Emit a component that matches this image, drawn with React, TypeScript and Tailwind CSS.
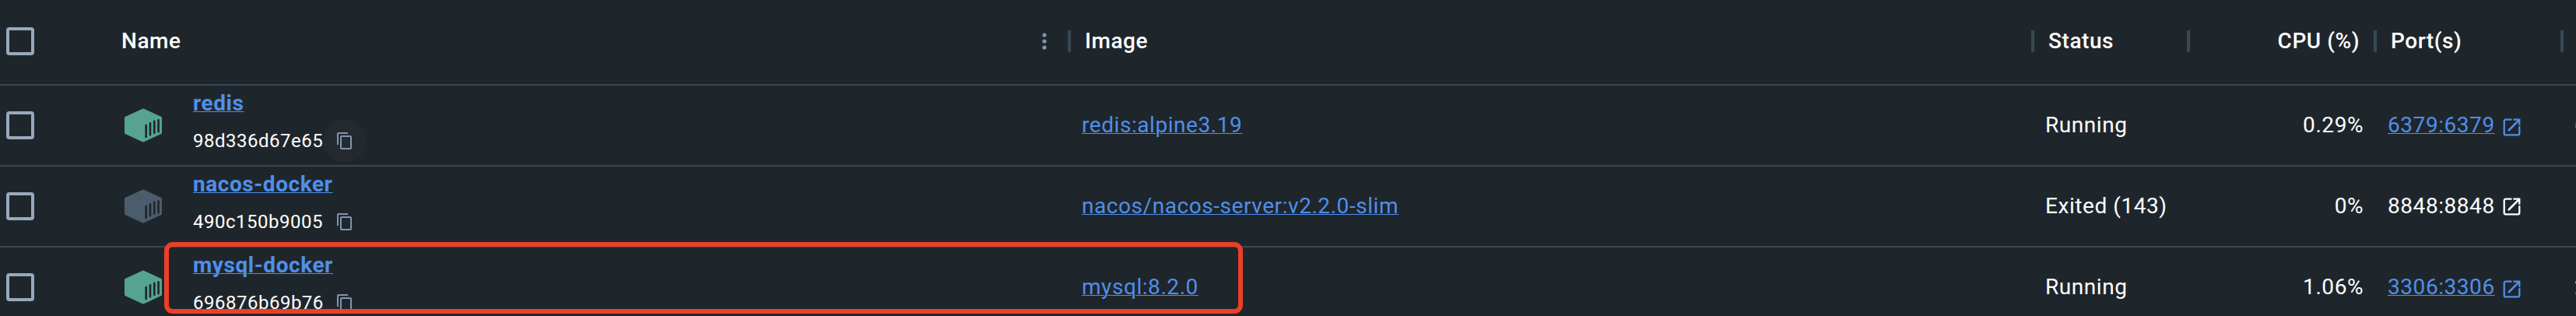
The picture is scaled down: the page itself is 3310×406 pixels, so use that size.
import React from "react";

type Container = {
  name: string;
  id: string;
  image: string;
  status: string;
  cpu: string;
  port: string;
  running: boolean;
  hovered?: boolean;
  next: string;
};

const containers: Container[] = [
  { name: "redis", id: "98d336d67e65", image: "redis:alpine3.19", status: "Running", cpu: "0.29%", port: "6379:6379", running: true, hovered: true, next: "6" },
  { name: "nacos-docker", id: "490c150b9005", image: "nacos/nacos-server:v2.2.0-slim", status: "Exited (143)", cpu: "0%", port: "8848:8848", running: false, next: "" },
  { name: "mysql-docker", id: "696876b69b76", image: "mysql:8.2.0", status: "Running", cpu: "1.06%", port: "3306:3306", running: true, next: "2" },
];

const columns = "grid grid-cols-[156px_1218px_1238px_200px_240px_240px_18px] items-center";
const link = "text-[#4f8fea] underline decoration-[1px] underline-offset-[1px]";

function Checkbox() {
  return <div className="ml-[8px] h-[36px] w-[36px] rounded-[4px] border-4 border-[#98a9bd]" />;
}

function ContainerIcon({ running }: { running: boolean }) {
  return (
    <svg className="h-[44px] w-[48px] shrink-0" viewBox="0 0 48 44">
      <path
        className={running ? "fill-[#55a390]" : "fill-[#4b5c6d]"}
        d="M23 .8Q24 .3 25 .8L47.2 11Q48 11.4 48 12.2V31.8Q48 32.6 47.2 33L25 43.2Q24 43.7 23 43.2L.8 33Q0 32.6 0 31.8V12.2Q0 11.4 .8 11Z"
      />
      <path className="stroke-[#1f262b]" strokeWidth="2.6" strokeLinecap="round" d="M27.7 22V37M33 19.3V34.3M38.3 16.7V31.7M43.6 15.2V30.2" />
    </svg>
  );
}

function CopyIcon() {
  return (
    <svg className="h-[24px] w-[24px] fill-[#7f95ae]" viewBox="0 0 24 24">
      <path d="M16 1H4c-1.1 0-2 .9-2 2v14h2V3h12zm3 4H8c-1.1 0-2 .9-2 2v14c0 1.1.9 2 2 2h11c1.1 0 2-.9 2-2V7c0-1.1-.9-2-2-2m0 16H8V7h11z" />
    </svg>
  );
}

function OpenIcon({ className }: { className: string }) {
  return (
    <svg className={`ml-[7px] h-[29px] w-[29px] shrink-0 fill-none stroke-current ${className}`} viewBox="0 0 24 24">
      <path strokeWidth="1.9" d="M12 3.9H5.4A1.5 1.5 0 0 0 3.9 5.4V18.6A1.5 1.5 0 0 0 5.4 20.1H18.6A1.5 1.5 0 0 0 20.1 18.6V10.9" />
      <path strokeWidth="1.9" d="M13.6 3.9H20.1V9.8" />
      <path strokeWidth="2.2" strokeLinecap="round" d="M8.9 15.1L19.3 4.7" />
    </svg>
  );
}

function Separator() {
  return <div className="h-[28px] w-[4px] shrink-0 bg-[#394853]" />;
}

export default function App() {
  return (
    <div className="relative h-[406px] w-[3310px] overflow-hidden bg-[#1f262b] font-['Roboto',sans-serif] text-[28px] leading-[40px] tracking-[0.56px] text-white">
      <div className={`${columns} h-[110px] border-b-2 border-[#394853] pb-[2px] font-medium`}>
        <Checkbox />
        <div className="flex items-center justify-between pr-[24px]">
          <span>Name</span>
          <svg className="h-[24px] w-[16px] fill-[#7f95ae]" viewBox="0 0 16 24">
            <circle cx="8" cy="4" r="2.6" />
            <circle cx="8" cy="12" r="2.6" />
            <circle cx="8" cy="20" r="2.6" />
          </svg>
        </div>
        <div className="-ml-[2px] flex items-center gap-[18px]"><Separator /><span>Image</span></div>
        <div className="-ml-[2px] flex items-center gap-[18px]"><Separator /><span>Status</span></div>
        <div className="-ml-[2px] flex items-center justify-between pr-[20px]"><Separator /><span>CPU (%)</span></div>
        <div className="-ml-[2px] flex items-center gap-[18px]"><Separator /><span>Port(s)</span></div>
        <div className="-ml-[2px] flex"><Separator /></div>
      </div>
      {containers.map((c) => (
        <div key={c.name} className={`${columns} h-[104px] border-b-2 border-[#394853]`}>
          <Checkbox />
          <div className="flex items-center pl-[4px]">
            <ContainerIcon running={c.running} />
            <div className="ml-[40px] flex h-[102px] flex-col">
              <a className={`${link} mt-[3px] font-bold`}>{c.name}</a>
              <div className="flex h-[56px] items-center">
                <span className="w-[167px] text-[24px] tracking-[0.5px]">{c.id}</span>
                <span className={`flex h-[56px] w-[56px] items-center justify-center rounded-full ${c.hovered ? "bg-[#23292f]" : ""}`}>
                  <CopyIcon />
                </span>
              </div>
            </div>
          </div>
          <div className="pl-[16px]"><a className={link}>{c.image}</a></div>
          <div className="pl-[16px]">{c.status}</div>
          <div className="pr-[15px] text-right">{c.cpu}</div>
          <div className={`flex items-center pl-[16px] ${c.running ? "text-[#4f8fea]" : ""}`}>
            <a className={c.running ? link : ""}>{c.port}</a>
            <OpenIcon className={c.running ? "mt-[4px]" : ""} />
          </div>
          <div className="pl-[16px]">{c.next}</div>
        </div>
      ))}
      <div className="absolute left-[211px] top-[311px] h-[92px] w-[1386px] rounded-[11px] border-[6px] border-[#ec4026]" />
    </div>
  );
}
